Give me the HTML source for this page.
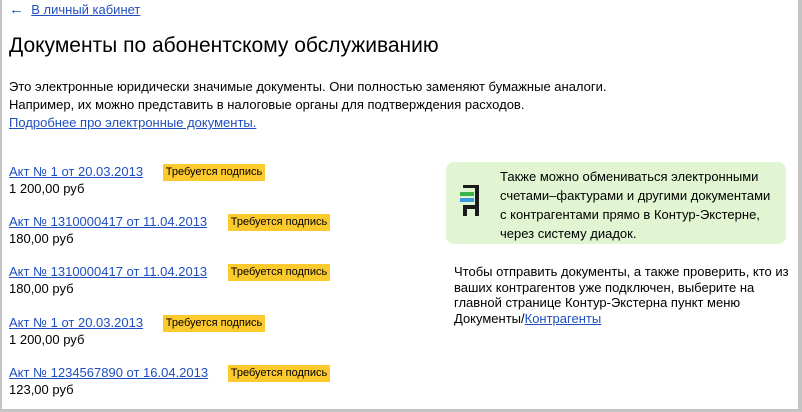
<!DOCTYPE html>
<html><head><meta charset="utf-8"><style>
*{margin:0;padding:0}
body{width:802px;height:412px;position:relative;background:#fff;font-family:"Liberation Sans",Arial,sans-serif;font-size:13px;color:#000;overflow:hidden}
.frame{position:absolute;left:0;top:0;width:796px;height:409px;border-left:2px solid #c4c4c4;border-right:4px solid #c4c4c4;border-bottom:3px solid #c4c4c4}
.a{position:absolute;white-space:nowrap}
a{color:#1f4fbf;text-decoration:underline}
.b{position:absolute;background:#fcca2c;height:17px;line-height:17px;font-size:11px;width:102px;text-align:center;white-space:nowrap}
</style></head><body>
<div class="frame"></div>
<div class="a" style="left:9px;top:2px;font-size:13px"><span style="color:#1f4fbf;font-size:15px;line-height:13px">←</span>&nbsp; <a>В личный кабинет</a></div>
<div class="a" style="left:9px;top:34px;font-size:21px">Документы по абонентскому обслуживанию</div>
<div class="a" style="left:9px;top:78px;line-height:18px">Это электронные юридически значимые документы. Они полностью заменяют бумажные аналоги.<br>Например, их можно представить в налоговые органы для подтверждения расходов.<br><a>Подробнее про электронные документы.</a></div>

<div class="a" style="left:9px;top:163px;line-height:17px"><a>Акт № 1 от 20.03.2013</a><br>1 200,00 руб</div>
<div class="b" style="left:163px;top:164px">Требуется подпись</div>
<div class="a" style="left:9px;top:213px;line-height:17px"><a>Акт № 1310000417 от 11.04.2013</a><br>180,00 руб</div>
<div class="b" style="left:228px;top:214px">Требуется подпись</div>
<div class="a" style="left:9px;top:263px;line-height:17px"><a>Акт № 1310000417 от 11.04.2013</a><br>180,00 руб</div>
<div class="b" style="left:228px;top:264px">Требуется подпись</div>
<div class="a" style="left:9px;top:314px;line-height:17px"><a>Акт № 1 от 20.03.2013</a><br>1 200,00 руб</div>
<div class="b" style="left:163px;top:315px">Требуется подпись</div>
<div class="a" style="left:9px;top:364px;line-height:17px"><a>Акт № 1234567890 от 16.04.2013</a><br>123,00 руб</div>
<div class="b" style="left:228px;top:365px">Требуется подпись</div>

<div style="position:absolute;left:446px;top:162px;width:340px;height:82px;background:#e1f5d2;border-radius:8px"></div>
<svg style="position:absolute;left:460px;top:185px" width="20" height="31">
<rect x="3" y="0" width="16" height="3" fill="#1a1a1a"/>
<rect x="15" y="0" width="4" height="31" fill="#1a1a1a"/>
<rect x="0" y="7" width="14" height="4" fill="#3cb44a"/>
<rect x="0" y="13" width="14" height="4" fill="#3a9be0"/>
<rect x="3" y="20" width="16" height="4" fill="#1a1a1a"/>
<rect x="3" y="20" width="4" height="11" fill="#1a1a1a"/>
</svg>
<div class="a" style="left:500px;top:167px;line-height:19px">Также можно обмениваться электронными<br>счетами–фактурами и другими документами<br>с контрагентами прямо в Контур-Экстерне,<br>через систему диадок.</div>
<div class="a" style="left:454px;top:264px;line-height:15.5px">Чтобы отправить документы, а также проверить, кто из<br>ваших контрагентов уже подключен, выберите на<br>главной странице Контур-Экстерна пункт меню<br>Документы/<a>Контрагенты</a></div>
</body></html>
